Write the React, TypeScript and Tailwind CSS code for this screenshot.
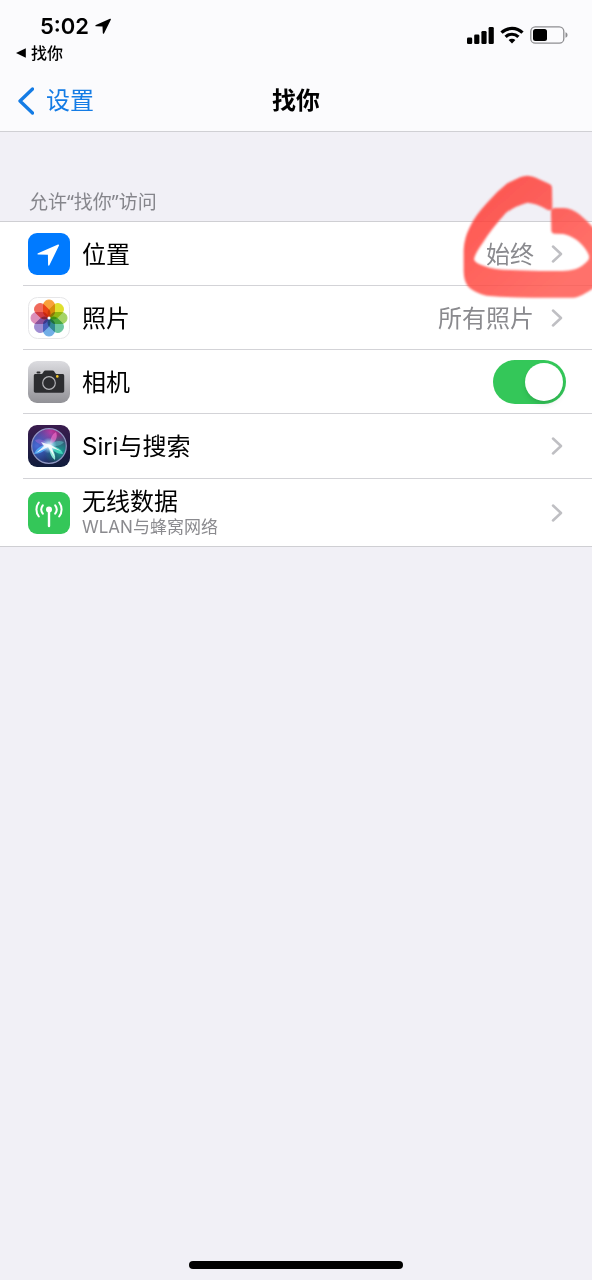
import type { ReactNode } from 'react'

const petals = [
  { angle: 0, color: '#f9a13a' },
  { angle: 45, color: '#dfe02e' },
  { angle: 90, color: '#a5d366' },
  { angle: 135, color: '#6cc6a2' },
  { angle: 180, color: '#72aee6' },
  { angle: 225, color: '#a08ed2' },
  { angle: 270, color: '#dc8fbb' },
  { angle: 315, color: '#f06a5c' },
]

function LocationIcon() {
  return (
    <svg viewBox="0 0 42 42" className="w-[42px] h-[42px] shrink-0" aria-hidden="true">
      <rect width="42" height="42" rx="9" fill="#007aff" />
      <path
        d="M30 11.5 10 20.200c-.8.4-.6 1.300.2 1.300l9.700.2.2 10.200c0 .9 1 1.100 1.400.2L31 12.600c.3-.8-.3-1.400-1-1.100Z"
        fill="#fff"
      />
    </svg>
  )
}

function PhotosIcon() {
  return (
    <svg viewBox="0 0 42 42" className="w-[42px] h-[42px] shrink-0" aria-hidden="true">
      <rect x=".5" y=".5" width="41" height="41" rx="9" fill="#fff" stroke="#e6e6e8" />
      <g style={{ isolation: 'isolate' }}>
        {petals.map((p) => (
          <rect
            key={p.angle}
            x="15.500"
            y="3"
            width="11"
            height="17"
            rx="5.200"
            fill={p.color}
            stroke={p.color}
            strokeWidth="1"
            transform={`rotate(${p.angle} 21 21)`}
            style={{ mixBlendMode: 'multiply' }}
          />
        ))}
      </g>
      <circle cx="21" cy="21" r="1.500" fill="#fff" />
    </svg>
  )
}

function CameraIcon() {
  return (
    <svg viewBox="0 0 42 42" className="w-[42px] h-[42px] shrink-0" aria-hidden="true">
      <defs>
        <linearGradient id="camera-bg" x1="0" y1="0" x2="0" y2="1">
          <stop offset="0" stopColor="#dcdce0" />
          <stop offset="1" stopColor="#919196" />
        </linearGradient>
      </defs>
      <rect width="42" height="42" rx="9" fill="url(#camera-bg)" />
      <rect x="8.500" y="10.500" width="4" height="2" rx="1" fill="#2c2d30" />
      <path
        d="M7.500 13H13c1 0 1.500-.5 2-1.300l.7-1.200c.4-.7 1-1 1.800-1h7c.8 0 1.400.3 1.800 1l.7 1.200c.5.8 1 1.300 2 1.300h5.500c1 0 1.700.7 1.700 1.700v15.300c0 1-.7 1.700-1.700 1.700h-27c-1 0-1.700-.7-1.700-1.700V14.700c0-1 .7-1.700 1.700-1.700Z"
        fill="#2c2d30"
      />
      <circle cx="21" cy="22" r="6.300" fill="#2c2d30" stroke="#b4b4b8" strokeWidth="1.200" />
      <circle cx="29.300" cy="15.400" r="1.300" fill="#f6c927" />
    </svg>
  )
}

function SiriIcon() {
  return (
    <svg viewBox="0 0 42 42" className="w-[42px] h-[42px] shrink-0" aria-hidden="true">
      <defs>
        <linearGradient id="siri-bg" x1="0" y1="0" x2="0" y2="1">
          <stop offset="0" stopColor="#3a1c4e" />
          <stop offset="1" stopColor="#101c3c" />
        </linearGradient>
        <radialGradient id="siri-pink" cx=".55" cy=".1" r=".65">
          <stop offset="0" stopColor="#c8349c" />
          <stop offset="1" stopColor="#c8349c" stopOpacity="0" />
        </radialGradient>
        <radialGradient id="siri-blue" cx=".15" cy=".5" r=".65">
          <stop offset="0" stopColor="#4a6cd8" />
          <stop offset="1" stopColor="#2c74e0" stopOpacity="0" />
        </radialGradient>
        <radialGradient id="siri-teal" cx=".85" cy=".65" r=".5">
          <stop offset="0" stopColor="#1c9c94" />
          <stop offset="1" stopColor="#1c9c94" stopOpacity="0" />
        </radialGradient>
        <radialGradient id="siri-glow">
          <stop offset="0" stopColor="#fff" />
          <stop offset=".4" stopColor="#c8f4ff" stopOpacity=".7" />
          <stop offset="1" stopColor="#7fd8ff" stopOpacity="0" />
        </radialGradient>
      </defs>
      <rect width="42" height="42" rx="9" fill="url(#siri-bg)" />
      <circle cx="21" cy="21" r="17" fill="#20224e" />
      <circle cx="21" cy="21" r="17" fill="url(#siri-pink)" />
      <circle cx="21" cy="21" r="17" fill="url(#siri-blue)" />
      <circle cx="21" cy="21" r="17" fill="url(#siri-teal)" />
      <path d="M21 20C17 15 12 13 7 15c2 4 8 6 14 5Z" fill="#a46ad8" opacity=".5" />
      <path d="M22 20c0-6 2-11 6-13 2 5 0 10-6 13Z" fill="#e86ac4" opacity=".75" />
      <path d="M22 20c4-4 9-5 14-3-3 4-9 5-14 3Z" fill="#59b9c0" opacity=".6" />
      <path d="M21 20c7 1 13 4 14 9-6 0-11-3-14-9Z" fill="#48e5c4" opacity=".8" />
      <path d="M20 20C12 20 8 24 6 29c7 0 12-4 15-8Z" fill="#55b8ff" opacity=".8" />
      <path d="M21 20c4 4 7 10 6 15-4-3-6-8-6-15Z" fill="#a8ffe6" opacity=".85" />
      <circle cx="21" cy="20.500" r="8" fill="url(#siri-glow)" />
      <path d="m8 28 8-7-3-4 6 2 4 1 10 6-9-3 2.500 9L20 22l-6 3Z" fill="#fff" opacity=".85" />
      <circle cx="21" cy="21" r="17.300" fill="none" stroke="#a3acd8" strokeWidth="1.200" opacity=".85" />
    </svg>
  )
}

function CellularIcon() {
  return (
    <svg viewBox="0 0 42 42" className="w-[42px] h-[42px] shrink-0" aria-hidden="true">
      <rect width="42" height="42" rx="9" fill="#34c759" />
      <circle cx="21" cy="17.500" r="3" fill="#fff" />
      <g fill="none" stroke="#fff" strokeWidth="2" strokeLinecap="round">
        <path d="M21 19v15" strokeWidth="2.400" />
        <path d="M14.800 13.300a7 7 0 0 0 0 8.400M27.200 13.300a7 7 0 0 1 0 8.400" />
        <path d="M10.800 10.500a11.500 11.500 0 0 0 0 14M31.200 10.500a11.500 11.500 0 0 1 0 14" />
      </g>
    </svg>
  )
}

function Chevron() {
  return (
    <svg viewBox="0 0 12 18" className="w-3 h-[18px] shrink-0" aria-hidden="true">
      <path d="m2 1.500 8 7.500-8 7.500" fill="none" stroke="#bfbfc3" strokeWidth="2.500" strokeLinecap="round" strokeLinejoin="round" />
    </svg>
  )
}

function StatusIcons() {
  return (
    <div className="flex items-center gap-1.5">
      <svg viewBox="0 0 27 17" className="w-[27px] h-[17px]" aria-label="信号">
        <rect y="10.500" width="5.200" height="6.500" rx="1.300" />
        <rect x="7.200" y="7.500" width="5.200" height="9.500" rx="1.300" />
        <rect x="14.400" y="4" width="5.200" height="13" rx="1.300" />
        <rect x="21.600" width="5.200" height="17" rx="1.300" />
      </svg>
      <svg viewBox="0 0 24 18" className="w-6 h-[18px]" aria-label="WLAN">
        <g fill="none" stroke="#000" strokeWidth="3.200">
          <path d="M1.500 6.700a15 15 0 0 1 21 0" />
          <path d="M5.600 10.900a9.100 9.100 0 0 1 12.800 0" />
        </g>
        <path d="M12 17.500 8.600 14.100a4.900 4.900 0 0 1 6.800 0Z" />
      </svg>
      <svg viewBox="0 0 38 18" className="w-[38px] h-[18px]" aria-label="电池">
        <rect x=".8" y=".8" width="33" height="16.400" rx="4.500" fill="none" stroke="#8e8e91" strokeWidth="1.300" />
        <rect x="3" y="3" width="14" height="12" rx="2.500" />
        <path d="M35.500 6.200c1.300.4 2 1.500 2 2.800s-.7 2.400-2 2.800Z" fill="#8e8e91" />
      </svg>
    </div>
  )
}

function Scribble() {
  return (
    <svg
      viewBox="0 0 456 420"
      className="absolute right-0 -top-[62px] w-[152px] h-[140px] z-10 pointer-events-none"
      aria-hidden="true"
    >
      <defs>
        <linearGradient id="marker" x1="0" y1=".35" x2=".65" y2="1">
          <stop offset="0" stopColor="#ff3b34" />
          <stop offset="1" stopColor="#ff574f" />
        </linearGradient>
        <filter id="marker-edge">
          <feGaussianBlur stdDeviation="2.500" />
        </filter>
      </defs>
      <path
        d="M336 84Q336 75 327 71L284 52Q262 42 240 52L202 70Q170 95 140 130Q105 168 90 200Q72 235 71 270L71 335Q72 368 88 383Q105 398 140 407Q220 414 300 413L402 413Q425 410 470 378L470 214Q445 185 418 163Q395 145 372 144L346 144Q333 144 333 156L334 212Q335 221 345 221L370 222Q392 226 415 244Q437 264 446 284Q449 294 445 300Q428 320 405 328Q385 334 360 333L300 333L210 330Q165 330 130 317Q104 309 102 298Q105 280 130 246Q150 212 198 158Q230 136 262 128Q290 130 322 149Q336 155 337 140Z"
        fill="url(#marker)"
        opacity=".84"
        filter="url(#marker-edge)"
      />
    </svg>
  )
}

type RowProps = {
  icon: ReactNode
  label: string
  detail?: string
  value?: string
}

function LinkRow({ icon, label, detail, value }: RowProps) {
  return (
    <a href="#" className="flex items-center pl-[5px] h-full">
      {icon}
      <span className="ml-3 pt-0.5 flex-1 flex flex-col">
        <span className={detail ? 'text-2xl leading-[26px]' : 'text-2xl leading-8'}>{label}</span>
        {detail && <span className="text-[17px] leading-6 text-[#8a8a8e]">{detail}</span>}
      </span>
      {value && <span className="pt-0.5 text-2xl leading-8 text-[#8a8a8e] mr-[17px]">{value}</span>}
      <Chevron />
    </a>
  )
}

export default function App() {
  return (
    <div className="min-h-screen flex flex-col bg-[#f1f0f6] text-black font-['Inter','Noto_Sans_CJK_SC',sans-serif]">
      <header className="bg-[#fbfbfd] border-b border-[#d0d0d4]">
        <div className="flex justify-between pl-4 pr-6 pt-3">
          <div>
            <div className="flex items-center gap-1.5 pl-6 h-7">
              <span className="text-[22px] leading-7 font-semibold">5:02</span>
              <svg viewBox="0 0 16 16" className="w-4 h-4" aria-hidden="true">
                <path d="M15 .8.900 6.900c-.8.4-.6 1.300.2 1.300l6.400.3.300 6.500c0 .8 1 1 1.300.2L15.800 1.700c.2-.6-.2-1.100-.8-.9Z" />
              </svg>
            </div>
            <a href="#" className="flex items-center gap-[5px] h-[26px] text-base leading-6 font-medium">
              <svg viewBox="0 0 10 10" className="w-2.5 h-2.5" aria-hidden="true">
                <path d="M9.800.3v9.400L0 5Z" />
              </svg>
              找你
            </a>
          </div>
          <div className="pt-3.5">
            <StatusIcons />
          </div>
        </div>
        <nav className="grid grid-cols-3 items-center h-[65px] px-[18px] pt-1">
          <a href="#" className="flex items-center gap-3 text-2xl leading-8 text-[#147ce5]">
            <svg viewBox="0 0 16 28" className="w-4 h-7" aria-hidden="true">
              <path d="M14.500 2 2 14l12.500 12" fill="none" stroke="currentColor" strokeWidth="3.300" strokeLinecap="round" strokeLinejoin="round" />
            </svg>
            设置
          </a>
          <h1 className="text-center text-2xl leading-8 font-semibold">找你</h1>
        </nav>
      </header>

      <main className="flex-1">
        <h2 className="pt-14 pb-[5px] pl-[29px] text-[19px] leading-7 text-[#85858b] font-['Noto_Sans','Noto_Sans_CJK_SC',sans-serif]">
          允许“找你”访问
        </h2>
        <ul className="bg-white border-y border-[#cfcfd3] pl-[23px]">
          <li className="h-16 pr-[29px] border-b border-[#d3d3d7] relative">
            <LinkRow icon={<LocationIcon />} label="位置" value="始终" />
            <Scribble />
          </li>
          <li className="h-16 pr-[29px] border-b border-[#d3d3d7]">
            <LinkRow icon={<PhotosIcon />} label="照片" value="所有照片" />
          </li>
          <li className="h-16 pl-[5px] pr-[26px] border-b border-[#d3d3d7] flex items-center">
            <CameraIcon />
            <label htmlFor="camera" className="ml-3 pt-0.5 flex-1 text-2xl leading-8">相机</label>
            <input
              id="camera"
              type="checkbox"
              role="switch"
              defaultChecked
              className="appearance-none w-[73px] h-11 rounded-full bg-gray-200 checked:bg-[#34c759] p-[3px] flex items-center before:content-[''] before:w-[38px] before:h-[38px] before:rounded-full before:bg-white before:shadow-md checked:before:ml-auto"
            />
          </li>
          <li className="h-[65px] pr-[29px] border-b border-[#d3d3d7]">
            <LinkRow icon={<SiriIcon />} label="Siri与搜索" />
          </li>
          <li className="h-[67px] pr-[29px]">
            <LinkRow icon={<CellularIcon />} label="无线数据" detail="WLAN与蜂窝网络" />
          </li>
        </ul>
      </main>

      <footer className="flex justify-center pb-[11px]">
        <div className="w-[36%] h-2 rounded-full bg-black" />
      </footer>
    </div>
  )
}
